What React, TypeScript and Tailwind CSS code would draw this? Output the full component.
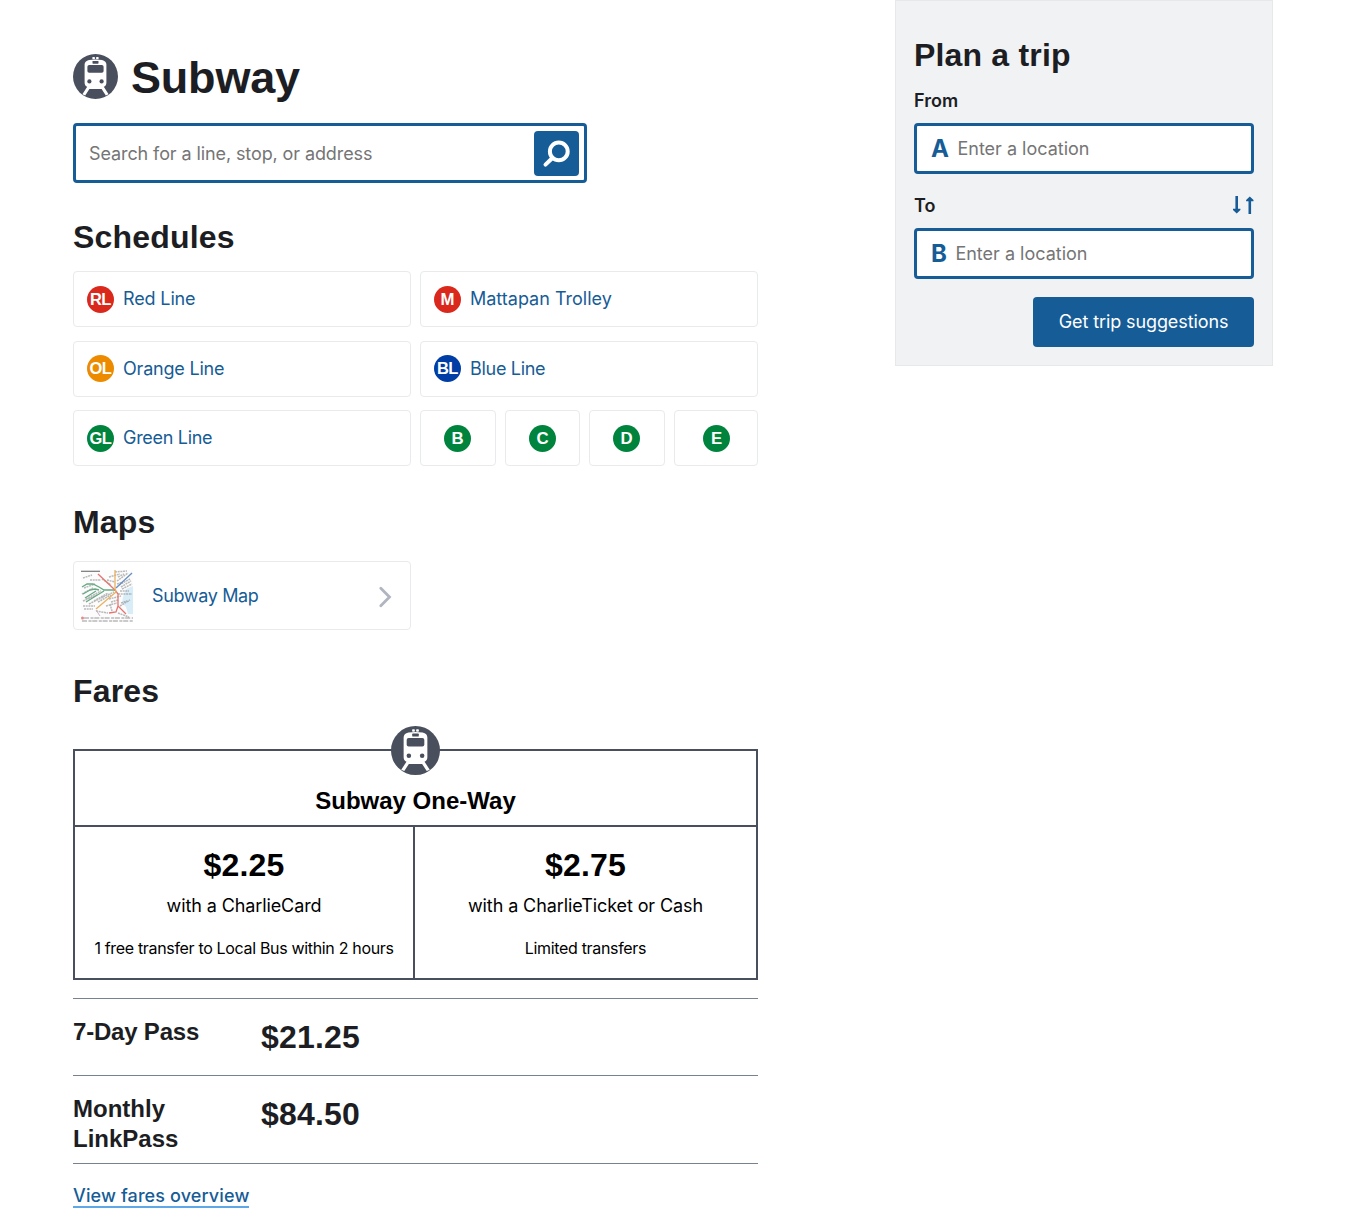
import React from "react";

function TrainIcon({ className }: { className: string }) {
  return (
    <svg viewBox="0 0 45 45" className={className} aria-hidden="true">
      <circle cx="22.5" cy="22.5" r="22.5" fill="#494f5c" />
      <rect x="19.4" y="3" width="2.5" height="2.3" rx="0.6" fill="#fff" />
      <rect x="23.1" y="3" width="2.5" height="2.3" rx="0.6" fill="#fff" />
      <path
        fill="#fff"
        d="M16 6Q22.5 4.9 29 6Q33.4 7 33.4 10.5V28.5Q33.4 32 30.8 32.8L35.6 40.2L32.8 41.4L28.6 34.9H16.4L12.2 41.4L9.4 40.2L14.2 32.8Q11.6 32 11.6 28.5V10.5Q11.6 7 16 6Z"
      />
      <rect x="19.5" y="7" width="6" height="2.7" rx="0.6" fill="#494f5c" />
      <rect x="14.4" y="11" width="16.2" height="7.8" rx="1.8" fill="#494f5c" />
      <circle cx="16.4" cy="27.4" r="2.1" fill="#494f5c" />
      <circle cx="28.6" cy="27.4" r="2.1" fill="#494f5c" />
    </svg>
  );
}

function Badge({ label, color }: { label: string; color: string }) {
  const wide = label.length > 1;
  return (
    <svg viewBox="0 0 27 27" className="h-[27px] w-[27px] shrink-0" aria-hidden="true">
      <circle cx="13.5" cy="13.5" r="13.5" fill={color} />
      <text
        x={wide ? 13.3 : 13.5}
        y="19.3"
        textAnchor="middle"
        fontFamily="'Liberation Sans', sans-serif"
        fontWeight="700"
        fontSize={wide ? 16.5 : 16.8}
        letterSpacing={wide ? -0.6 : 0}
        fill="#fff"
      >
        {label}
      </text>
    </svg>
  );
}

type LineCardProps = { label: string; name: string; color: string; pad: string; tracking: string };

function LineCard({ label, name, color, pad, tracking }: LineCardProps) {
  return (
    <a className="flex h-14 w-[338px] rounded-[4px] border border-[#e9eaec] pl-[13px] text-[#165c96]">
      <span className={pad}>
        <Badge label={label} color={color} />
      </span>
      <span className={"ml-[9px] mt-[13px] leading-[27px] " + tracking}>{name}</span>
    </a>
  );
}

function BranchCard({ label, width }: { label: string; width: string }) {
  return (
    <a className={"flex h-14 justify-center rounded-[4px] border border-[#e9eaec] pt-[14px] " + width}>
      <Badge label={label} color="#00843d" />
    </a>
  );
}

function MapThumb() {
  return (
    <svg viewBox="0 0 52 52" className="h-[52px] w-[52px]" fill="none" aria-hidden="true">
      <rect width="52" height="52" fill="#fcfcfc" />
      <path d="M45 19L52 16V44H47L45 37L41 33L42 27Z" fill="#d9edf8" />
      <path d="M0 1.3H19" stroke="#777" strokeWidth="1.2" />
      <g stroke="#777" strokeWidth="1.5" strokeDasharray="2 0.7" opacity="0.5">
        <path d="M3 18L14 14M1 24L12 18M2 31L16 25M5 29L20 21M8 34L22 27M13 31L27 23M17 32L30 25M22 27L33 22M38 15L49 9M36 11L47 3M41 19L51 14M40 17L50 11M28 7L39 4M26 10L34 12M37 24H51M39 21H48M21 9L30 15M28 29L40 26M25 36L36 33M30 32L37 30M39 36L49 30M40 33L46 31M15 41L27 43M37 43L48 47M2 36H14M3 39H12M9 10H20M2 8L11 5M34 2L46 1M29 34L31 41M37 7L43 4M36 14L42 12" />
      </g>
      <g strokeWidth="1.3">
        <path d="M1 17L6 14L12 14L18 17L23 20L35 20M2 24L9 20L14 19L18 20M4 28L15 21M5 32L18 24L23 21" stroke="#66a982" />
        <path d="M17 4L34 20L37 24V36L45 44M37 36L35 42L28 43" stroke="#e47671" />
        <path d="M34 0V18L35 22L15 39" stroke="#eab162" />
        <path d="M35 18L51 3" stroke="#668fc4" />
      </g>
      <path d="M15 40L19 46" stroke="#ccafc4" />
      <g stroke="#777" strokeWidth="1.3" strokeDasharray="5 1.5 3 0.8" opacity="0.5">
        <path d="M3 48H52M1 51H52" />
      </g>
      <circle cx="1.5" cy="48" r="1.5" fill="#e18b88" />
    </svg>
  );
}

function LocationField({ letter }: { letter: string }) {
  return (
    <div className="flex h-[51px] items-center rounded-[4px] border-[3px] border-[#165c96] bg-white pl-[14px]">
      <span className="text-2xl font-bold leading-[27px] tracking-[-0.5px] text-[#165c96]">{letter}</span>
      <input
        className="ml-[9px] w-[260px] bg-transparent tracking-[0px] outline-none placeholder:text-[#757575]"
        placeholder="Enter a location"
      />
    </div>
  );
}

const heading = "font-['Liberation_Sans',Arial,sans-serif] text-[32px] font-bold leading-10 tracking-[0.18px] text-[#1c1e23]";
const subheading = "font-['Liberation_Sans',Arial,sans-serif] text-2xl font-bold leading-[30px]";

function PassRow({ name, price, size }: { name: string; price: string; size: string }) {
  return (
    <div className={"flex border-t border-[#788190] pt-[18px] " + size}>
      <h3 className={subheading + " w-[188px] pr-12 text-[#1c1e23]"}>{name}</h3>
      <p className={heading}>{price}</p>
    </div>
  );
}

function FareCell({ price, media, note, width }: { price: string; media: string; note: string; width: string }) {
  return (
    <div className={"flex flex-col items-center pt-[18px] text-black " + width}>
      <div className="font-['Liberation_Sans',Arial,sans-serif] text-[32px] font-bold leading-10 tracking-[0.2px]">{price}</div>
      <div className="mt-[7px] leading-[27px] tracking-[-0.1px]">{media}</div>
      <div className="mt-[17px] text-base leading-6 tracking-[-0.33px]">{note}</div>
    </div>
  );
}

export default function App() {
  return (
    <div className="flex h-[1227px] w-[1345px] justify-between overflow-hidden bg-white pl-[73px] pr-[72px] font-['Inter',sans-serif] text-[18px] text-[#1c1e23]">
      <main className="w-[685px]">
        <h1 className="mt-[49px] flex h-[56px] font-['Liberation_Sans',Arial,sans-serif] text-[45px] font-bold leading-[58px] tracking-[-0.2px]">
          <TrainIcon className="mr-[13px] mt-[5px] h-[45px] w-[45px]" />
          Subway
        </h1>

        <div className="mt-[18px] flex h-[60px] w-[514px] rounded-[4px] border-[3px] border-[#165c96] pl-[13px] pr-[5px] pt-[5px]">
          <input
            className="h-[45px] grow bg-transparent tracking-[-0.1px] outline-none placeholder:text-[#757575]"
            placeholder="Search for a line, stop, or address"
          />
          <button className="h-[45px] w-[45px] rounded-[4px] bg-[#165c96]" aria-label="Search">
            <svg viewBox="0 0 45 45" fill="none" stroke="#fff" className="h-[45px] w-[45px]">
              <circle cx="24.8" cy="20.4" r="8.9" strokeWidth="4" />
              <path d="M18.4 27L11.5 33.6" strokeWidth="4" strokeLinecap="round" />
            </svg>
          </button>
        </div>

        <h2 className={heading + " mt-[34px]"}>Schedules</h2>
        <div className="mt-[14px] flex gap-[9px]">
          <LineCard label="RL" name="Red Line" color="#da291c" pad="mt-[14px]" tracking="tracking-[-0.14px]" />
          <LineCard label="M" name="Mattapan Trolley" color="#da291c" pad="mt-[14px]" tracking="tracking-[0px]" />
        </div>
        <div className="mt-[14px] flex gap-[9px]">
          <LineCard label="OL" name="Orange Line" color="#ed8b00" pad="mt-[13px]" tracking="tracking-[-0.2px]" />
          <LineCard label="BL" name="Blue Line" color="#003da5" pad="mt-[13px]" tracking="tracking-[-0.3px]" />
        </div>
        <div className="mt-[13px] flex gap-[9px]">
          <LineCard label="GL" name="Green Line" color="#00843d" pad="mt-[14px]" tracking="tracking-[-0.3px]" />
          <BranchCard label="B" width="w-[76px] pr-px" />
          <BranchCard label="C" width="w-[75px]" />
          <BranchCard label="D" width="w-[76px] pr-px" />
          <BranchCard label="E" width="w-[84px]" />
        </div>

        <h2 className={heading + " mt-[36px]"}>Maps</h2>
        <a className="mt-[19px] flex h-[69px] w-[338px] items-center rounded-[4px] border border-[#e9eaec] pl-[7px] pr-[18px] text-[#165c96]">
          <MapThumb />
          <span className="ml-[19px] grow leading-[27px] tracking-[-0.35px]">Subway Map</span>
          <svg viewBox="0 0 14 22" fill="none" className="mt-[3px] h-[22px] w-[14px]">
            <path d="M2.8 2.2L11.5 11L2.8 19.8" stroke="#b0b5c0" strokeWidth="2.8" strokeLinecap="round" />
          </svg>
        </a>

        <h2 className={heading + " mt-[41px]"}>Fares</h2>
        <section className="relative mt-[38px] h-[231px] border-2 border-[#494f5c]">
          <TrainIcon className="absolute left-[316px] top-[-25px] h-[49px] w-[49px]" />
          <h3 className={subheading + " h-[76px] border-b-2 border-[#494f5c] pt-[35px] text-center text-black"}>Subway One-Way</h3>
          <div className="flex h-[151px]">
            <FareCell price="$2.25" media="with a CharlieCard" note="1 free transfer to Local Bus within 2 hours" width="w-[340px] border-r-2 border-[#494f5c]" />
            <FareCell price="$2.75" media="with a CharlieTicket or Cash" note="Limited transfers" width="w-[341px]" />
          </div>
        </section>

        <div className="mt-[18px] border-b border-[#788190]">
          <PassRow name="7-Day Pass" price="$21.25" size="h-[77px] tracking-[-0.2px]" />
          <PassRow name="Monthly LinkPass" price="$84.50" size="h-[88px]" />
        </div>
        <a className="mt-[18px] block h-[26px] w-[176px] whitespace-nowrap border-b-2 border-[#5fa8e8] font-medium leading-[27px] tracking-[0.12px] text-[#165c96]">
          View fares overview
        </a>
      </main>

      <aside className="h-[366px] w-[378px] border border-[#e6e8ea] bg-[#f1f2f4] px-[18px] pt-[34px]">
        <h2 className={heading}>Plan a trip</h2>
        <div className="mb-[9px] mt-[12px] font-semibold leading-[27px]">From</div>
        <LocationField letter="A" />
        <div className="mb-[9px] mt-[18px] flex h-[27px] items-center justify-between font-semibold leading-[27px]">
          To
          <svg viewBox="0 0 22 20" className="-mt-px h-[20px] w-[22px]" fill="#165c96" aria-label="Swap locations">
            <path d="M3.4 1H6v12.8h2.4V15l-3.7 3.6L1 15v-1.2h2.4z" />
            <path d="M16.5 19h2.6V6.2h2.4V5l-3.7-3.6L14.1 5v1.2h2.4z" />
          </svg>
        </div>
        <LocationField letter="B" />
        <button className="ml-auto mt-[18px] block h-[50px] w-[221px] rounded-[4px] bg-[#165c96] pb-px tracking-[-0.1px] text-white">
          Get trip suggestions
        </button>
      </aside>
    </div>
  );
}
